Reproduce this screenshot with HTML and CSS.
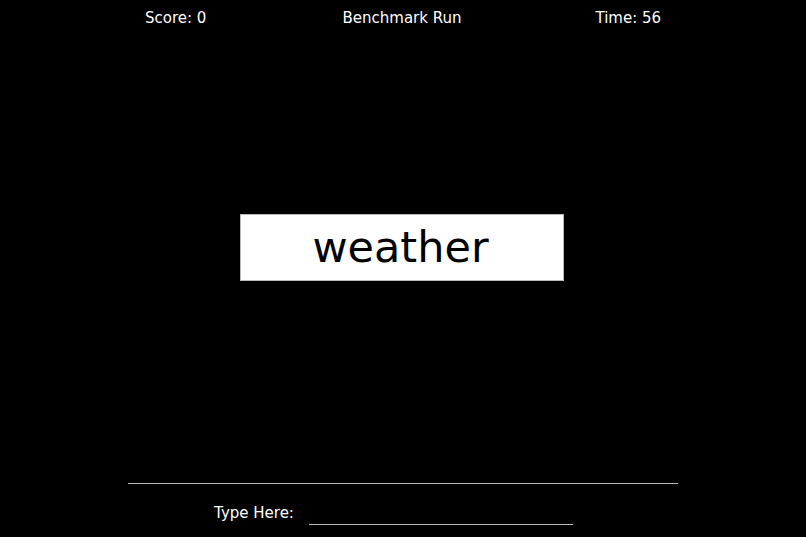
FILE: index.html
```html
<!DOCTYPE html>
<html>
<head>
<meta charset="utf-8">
<link rel="stylesheet" href="styles.css">
</head>
<body>
<div class="page">
  <header class="hud">
    <div class="cell">Score: 0</div>
    <div class="cell">Benchmark Run</div>
    <div class="cell">Time: 56</div>
  </header>
  <main class="stage">
    <div class="word">weather</div>
  </main>
  <footer class="entry">
    <div class="rule"></div>
    <div class="row">
      <label class="label" for="typed">Type Here:</label>
      <input class="field" id="typed" type="text">
    </div>
  </footer>
</div>
</body>
</html>
```
FILE: styles.css
```css
html, body {
  margin: 0;
  padding: 0;
  background: #000;
  height: 100%;
}
body {
  font-family: "DejaVu Sans", "Liberation Sans", sans-serif;
  color: #fff;
}
.page {
  width: 806px;
  height: 537px;
  display: flex;
  flex-direction: column;
  overflow: hidden;
}
.hud {
  flex: none;
  width: 681px;
  margin: 0 auto;
  padding: 9px 2px 0 0;
  box-sizing: border-box;
  display: grid;
  grid-template-columns: 1fr 1fr 1fr;
  font-size: 15px;
  line-height: 18px;
}
.cell {
  text-align: center;
}
.stage {
  flex: none;
  height: 456px;
  display: flex;
  align-items: flex-start;
  justify-content: center;
  padding: 187px 2px 0 0;
  box-sizing: border-box;
}
.word {
  width: 324px;
  height: 67px;
  box-sizing: border-box;
  background: #fff;
  border: 1px solid #bbb;
  color: #000;
  font-size: 43px;
  line-height: 64px;
  text-align: center;
  padding-right: 3px;
}
.entry {
  flex: none;
  display: flex;
  flex-direction: column;
  align-items: center;
}
.rule {
  width: 550px;
  height: 0;
  border-top: 1px solid #bbb;
}
.row {
  display: flex;
  align-items: flex-end;
  margin-top: 20px;
  margin-right: 19px;
  gap: 15px;
}
.label {
  font-size: 15px;
  line-height: 18px;
}
.field {
  width: 264px;
  height: 20px;
  padding: 0;
  margin: 0 0 -3px 0;
  background: transparent;
  border: none;
  border-bottom: 1px solid #bbb;
  outline: none;
  color: #fff;
  font: inherit;
  font-size: 15px;
}
```
